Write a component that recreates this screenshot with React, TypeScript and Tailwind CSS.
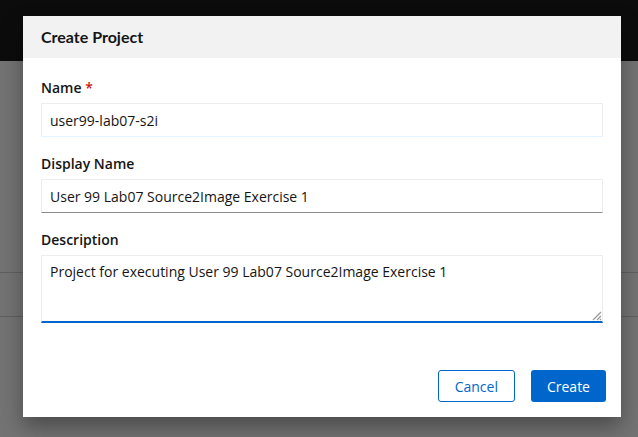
export default function App() {
  return (
    <div className="relative h-[437px] w-full overflow-hidden bg-[#737373] font-['Open_Sans',sans-serif]">
      <div className="h-[61px] bg-[#0c0c0c]" />
      <div className="mt-[211px] h-[45px] border-y border-[#5f5f5f]" />

      <div className="absolute left-[23px] top-[16px] flex h-[401px] w-[598px] flex-col bg-white shadow-[0_10px_20px_rgba(0,0,0,0.35)]">
        <div className="flex h-[42px] items-center bg-[#f2f2f2] px-[18px]">
          <h1 className="font-['Lato',sans-serif] text-[16px] font-bold text-[#151515]">Create Project</h1>
        </div>

        <div className="flex flex-1 flex-col px-[18px] pt-[20px]">
          <label className="text-[14px] font-semibold leading-[20px] text-[#151515]">
            Name <span className="text-[#c9190b]">*</span>
          </label>
          <div className="mt-[5px] flex h-[34px] items-center border border-[#ededed] border-b-[#e0f5ff] px-[8px] text-[14px] text-[#151515]">
            user99-lab07-s2i
          </div>

          <label className="mt-[17px] text-[14px] font-semibold leading-[20px] text-[#151515]">
            Display Name
          </label>
          <div className="mt-[5px] flex h-[34px] items-center border border-[#ededed] border-b-[#8a8d90] px-[8px] text-[14px] text-[#151515]">
            User 99 Lab07 Source2Image Exercise 1
          </div>

          <label className="mt-[17px] text-[14px] font-semibold leading-[20px] text-[#151515]">
            Description
          </label>
          <div className="relative mt-[5px] h-[68px] border border-[#ededed] border-b-2 border-b-[#0066cc] px-[8px] pt-[6px] text-[14px] leading-[20px] text-[#151515]">
            Project for executing User 99 Lab07 Source2Image Exercise 1
            <svg className="absolute bottom-0 right-0" width="12" height="12" viewBox="0 0 12 12">
              <path d="M11 3 L3 11 M11 7 L7 11 M11 10 L10 11" stroke="#9a9a9a" strokeWidth="1.2" />
            </svg>
          </div>

          <div className="mt-auto mb-[15px] -mr-[3px] flex justify-end gap-[16px]">
            <button className="h-[32px] rounded-[3px] border border-[#0066cc] px-[16px] text-[14px] text-[#0066cc]">
              Cancel
            </button>
            <button className="h-[32px] rounded-[3px] bg-[#0066cc] px-[16px] text-[14px] text-white">
              Create
            </button>
          </div>
        </div>
      </div>
    </div>
  );
}
